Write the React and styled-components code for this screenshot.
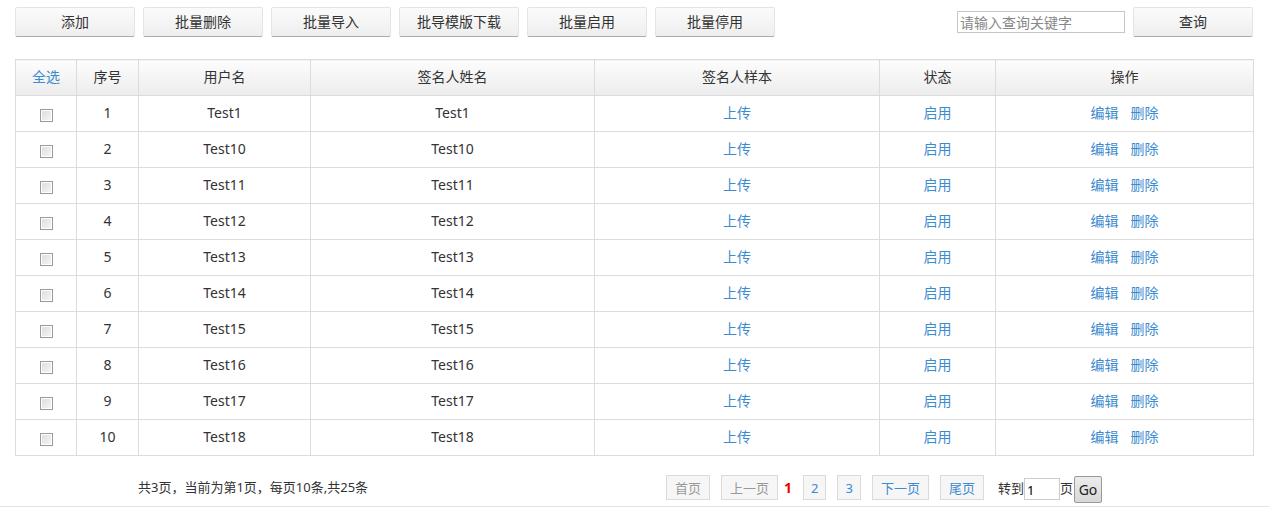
import React from 'react'
import styled, { createGlobalStyle } from 'styled-components'

const GlobalStyle = createGlobalStyle`
  body {
    margin: 0;
    font-family: "Noto Sans", "Noto Sans CJK SC", sans-serif;
    font-size: 14px;
    color: #333;
    background: #fff;
  }
`

const Page = styled.div`
  width: 1269px;
  height: 529px;
  overflow: hidden;
`

const Toolbar = styled.div`
  display: flex;
  align-items: center;
  padding: 7px 16px 0 15px;
  height: 30px;
`

const BtnGroup = styled.div`
  display: flex;
  gap: 8px;
`

const ToolButton = styled.button`
  width: 120px;
  height: 30px;
  padding: 0 0 2px;
  font-family: inherit;
  font-size: 14px;
  color: #333;
  background: linear-gradient(#fbfbfb, #eeeeee);
  border: 1px solid #e4e4e4;
  border-bottom: 1px solid #a9a9a9;
  border-radius: 2px;
  cursor: pointer;
`

const Search = styled.div`
  margin-left: auto;
  display: flex;
  align-items: center;
  gap: 8px;
`

const SearchInput = styled.input`
  width: 162px;
  height: 20px;
  padding: 0 2px;
  font-family: inherit;
  font-size: 14px;
  border: 1px solid #c6c6c6;
  outline: none;
  &::placeholder {
    color: #888;
  }
`

const Table = styled.table`
  margin: 22px 0 0 15px;
  width: 1239px;
  border-collapse: collapse;
  table-layout: fixed;
  border: 1px solid #dcdcdc;
`

const Th = styled.th`
  height: 32px;
  padding: 0 0 3px;
  font-weight: normal;
  color: ${p => (p.$link ? '#3b8bd0' : '#333')};
  background: linear-gradient(#fdfdfd, #ececec);
  border: 1px solid #dcdcdc;
  text-align: center;
`

const Td = styled.td`
  height: 33px;
  padding: 0 0 2px;
  text-align: center;
  border: 1px solid #dcdcdc;
  color: #333;
  line-height: 18px;
`

const Link = styled.a`
  color: #3b8bd0;
  text-decoration: none;
  cursor: pointer;
  & + & {
    margin-left: 12px;
  }
`

const Check = styled.span`
  display: inline-block;
  width: 11px;
  height: 11px;
  border: 1px solid #9a9a9a;
  background: linear-gradient(135deg, #dcdcdc, #f7f7f7);
  box-shadow: inset 0 0 0 1px #fff;
  vertical-align: middle;
  margin-top: 4px;
`

const Footer = styled.div`
  display: flex;
  align-items: center;
  height: 37px;
  margin-top: 13px;
  border-bottom: 1px solid #e3e3e3;
`

const Summary = styled.div`
  margin-left: 138px;
  width: 528px;
  font-size: 13px;
  color: #333;
  padding-bottom: 3px;
`

const Pager = styled.div`
  display: flex;
  align-items: center;
`

const PageBtn = styled.span`
  display: inline-flex;
  align-items: center;
  justify-content: center;
  box-sizing: border-box;
  height: 25px;
  padding: 0 ${p => (p.$num ? 7 : 8)}px;
  margin-right: 11px;
  font-size: 13px;
  color: ${p => (p.$disabled ? '#999' : '#3b8bd0')};
  background: #f6f6f6;
  border: 1px solid #dadada;
`

const Current = styled.span`
  color: #e00;
  font-weight: bold;
  font-size: 14px;
  margin: 0 11px 0 -5px;
`

const Goto = styled.span`
  font-size: 13px;
  color: #333;
  margin-left: 3px;
  display: flex;
  align-items: center;
`

const GotoInput = styled.input`
  box-sizing: border-box;
  width: 36px;
  height: 22px;
  margin-top: 3px;
  padding: 2px 2px 0;
  font-family: inherit;
  font-size: 13px;
  border: 1px solid #ccc;
  outline: none;
`

const GoButton = styled.button`
  width: 28px;
  height: 27px;
  margin-left: 1px;
  margin-top: 3px;
  padding: 0;
  font-family: inherit;
  font-size: 14px;
  color: #222;
  background: linear-gradient(#ececec, #d8d8d8);
  border: 1px solid #999;
  border-radius: 2px;
`

const cols = [61, 62, 172, 284, 285, 116, 258]

const rows = [
  ['1', 'Test1'],
  ['2', 'Test10'],
  ['3', 'Test11'],
  ['4', 'Test12'],
  ['5', 'Test13'],
  ['6', 'Test14'],
  ['7', 'Test15'],
  ['8', 'Test16'],
  ['9', 'Test17'],
  ['10', 'Test18'],
]

export default function App() {
  return (
    <Page>
      <GlobalStyle />
      <Toolbar>
        <BtnGroup>
          <ToolButton>添加</ToolButton>
          <ToolButton>批量删除</ToolButton>
          <ToolButton>批量导入</ToolButton>
          <ToolButton>批导模版下载</ToolButton>
          <ToolButton>批量启用</ToolButton>
          <ToolButton>批量停用</ToolButton>
        </BtnGroup>
        <Search>
          <SearchInput placeholder="请输入查询关键字" />
          <ToolButton>查询</ToolButton>
        </Search>
      </Toolbar>

      <Table>
        <colgroup>
          {cols.map((w, i) => (
            <col key={i} style={{ width: w }} />
          ))}
        </colgroup>
        <thead>
          <tr>
            <Th $link>全选</Th>
            <Th>序号</Th>
            <Th>用户名</Th>
            <Th>签名人姓名</Th>
            <Th>签名人样本</Th>
            <Th>状态</Th>
            <Th>操作</Th>
          </tr>
        </thead>
        <tbody>
          {rows.map(([n, name]) => (
            <tr key={n}>
              <Td><Check /></Td>
              <Td>{n}</Td>
              <Td>{name}</Td>
              <Td>{name}</Td>
              <Td><Link>上传</Link></Td>
              <Td><Link>启用</Link></Td>
              <Td>
                <Link>编辑</Link>
                <Link>删除</Link>
              </Td>
            </tr>
          ))}
        </tbody>
      </Table>

      <Footer>
        <Summary>共3页，当前为第1页，每页10条,共25条</Summary>
        <Pager>
          <PageBtn $disabled>首页</PageBtn>
          <PageBtn $disabled>上一页</PageBtn>
          <Current>1</Current>
          <PageBtn $num>2</PageBtn>
          <PageBtn $num>3</PageBtn>
          <PageBtn>下一页</PageBtn>
          <PageBtn>尾页</PageBtn>
          <Goto>
            转到<GotoInput defaultValue="1" />页
            <GoButton>Go</GoButton>
          </Goto>
        </Pager>
      </Footer>
    </Page>
  )
}
